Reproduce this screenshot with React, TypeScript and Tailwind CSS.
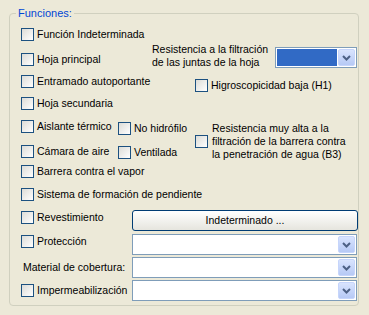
import React from "react";

function Box({ className = "" }: { className?: string }) {
  return (
    <span
      className={`block w-[13px] h-[13px] shrink-0 border border-[#1c5180] bg-linear-to-br from-[#dcdcd7] to-white ${className}`}
    />
  );
}

function Check({ label, className = "" }: { label: string; className?: string }) {
  return (
    <div className={`flex items-center h-[13px] ${className}`}>
      <Box />
      <span className="ml-[3px] whitespace-nowrap">{label}</span>
    </div>
  );
}

function Chevron() {
  return (
    <svg width="9" height="6" viewBox="0 0 9 6">
      <path d="M1 1l3.5 3.5L8 1" stroke="#4d6185" strokeWidth="2" fill="none" />
    </svg>
  );
}

function Combo({ className = "", selected = false }: { className?: string; selected?: boolean }) {
  return (
    <div className={`flex h-[21px] border border-[#7f9db9] bg-white p-[1px] gap-[1px] ${className}`}>
      <div className={`flex-1 ${selected ? "bg-[#316ac5]" : ""}`} />
      <div className="w-[17px] rounded-[2px] border border-[#c6d5fb] bg-linear-to-b from-[#d9e4fe] to-[#b6c9f5] flex items-center justify-center">
        <Chevron />
      </div>
    </div>
  );
}

export default function App() {
  return (
    <div className="w-[369px] h-[315px] bg-[#ece9d8] pt-[6px] pl-[9px] text-[10.5px] leading-[13px] text-black font-['Liberation_Sans',Arial,sans-serif]">
      <fieldset className="w-[349px] h-[300px] border border-[#d0d0bf] rounded-[4px]">
        <legend className="ml-[6px] px-[2px] leading-[14px] text-[11px] text-[#0046d5]">Funciones:</legend>

        <div className="flex">
          <div className="flex flex-col pl-[11px] pt-[8px] w-[142px] shrink-0">
            <Check label="Función Indeterminada" />
            <Check className="mt-[12px]" label="Hoja principal" />
            <Check className="mt-[9px]" label="Entramado autoportante" />
            <Check className="mt-[9px]" label="Hoja secundaria" />
          </div>
          <div className="flex flex-col pt-[23px]">
            <div className="flex items-start">
              <span className="w-[123px] whitespace-nowrap">
                Resistencia a la filtración
                <br />
                de las juntas de la hoja
              </span>
              <Combo className="mt-[4px] w-[82px]" selected />
            </div>
            <Check className="ml-[43px] mt-[10px]" label="Higroscopicidad baja (H1)" />
          </div>
        </div>

        <div className="flex mt-[10px]">
          <div className="flex flex-col pl-[11px] w-[185px] shrink-0">
            <div className="flex">
              <Check label="Aislante térmico" className="w-[97px]" />
              <Check label="No hidrófilo" className="mt-[2px]" />
            </div>
            <div className="flex mt-[10px]">
              <Check label="Cámara de aire" className="w-[97px]" />
              <Check label="Ventilada" className="mt-[1px]" />
            </div>
          </div>
          <div className="flex items-center mt-[2px]">
            <Box />
            <span className="ml-[4px] whitespace-nowrap">
              Resistencia muy alta a la
              <br />
              filtración de la barrera contra
              <br />
              la penetración de agua (B3)
            </span>
          </div>
        </div>

        <div className="flex flex-col pl-[11px]">
          <Check className="mt-[4px]" label="Barrera contra el vapor" />
          <Check className="mt-[10px]" label="Sistema de formación de pendiente" />
        </div>

        <div className="flex mt-[9px]">
          <div className="pl-[11px] w-[122px] shrink-0">
            <Check className="mt-[1px]" label="Revestimiento" />
          </div>
          <button className="w-[226px] h-[21px] rounded-[3px] border border-[#003c74] bg-linear-to-b from-white to-[#e6e5de] text-center">
            Indeterminado ...
          </button>
        </div>

        <div className="flex mt-[3px]">
          <div className="pl-[11px] w-[122px] shrink-0">
            <Check className="mt-[1px]" label="Protección" />
          </div>
          <Combo className="w-[225px]" />
        </div>

        <div className="flex items-center mt-[2px]">
          <div className="pl-[13px] w-[122px] shrink-0 whitespace-nowrap">Material de cobertura:</div>
          <Combo className="w-[225px]" />
        </div>

        <div className="flex items-center mt-[2px]">
          <div className="pl-[11px] w-[122px] shrink-0">
            <Check label="Impermeabilización" />
          </div>
          <Combo className="w-[225px]" />
        </div>
      </fieldset>
    </div>
  );
}
